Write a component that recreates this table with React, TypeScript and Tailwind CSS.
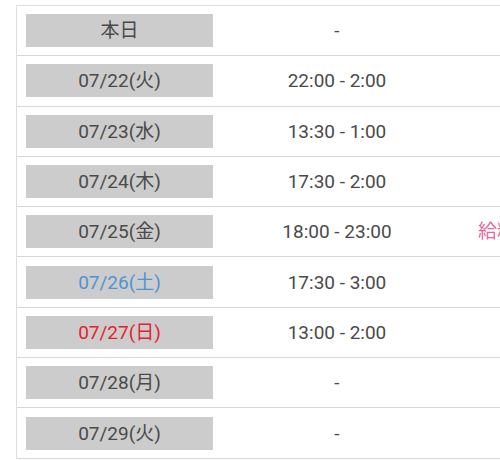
import React from "react";

type Row = { date: string; time: string; color?: string; note?: string };

const rows: Row[] = [
  { date: "本日", time: "-" },
  { date: "07/22(火)", time: "22:00 - 2:00" },
  { date: "07/23(水)", time: "13:30 - 1:00" },
  { date: "07/24(木)", time: "17:30 - 2:00" },
  { date: "07/25(金)", time: "18:00 - 23:00", note: "給料日" },
  { date: "07/26(土)", time: "17:30 - 3:00", color: "blue" },
  { date: "07/27(日)", time: "13:00 - 2:00", color: "red" },
  { date: "07/28(月)", time: "-" },
  { date: "07/29(火)", time: "-" },
];

export default function App() {
  return (
    <div
      className="w-[500px] h-[460px] overflow-hidden bg-white pt-[5px] pl-[16px]"
      style={{ fontFamily: 'Roboto, "Noto Sans CJK JP", sans-serif' }}
    >
      <div className="w-[600px] border-l border-t border-[#dedede]">
        {rows.map((r) => (
          <div
            key={r.date}
            className="h-[50.3px] flex items-center border-b-[1.5px] border-[#d6d6d6]"
          >
            <div className="w-[219px] pl-[9px] flex items-center">
              <div
                className={
                  "w-[187px] h-[33px] bg-[#cccccc] flex items-center justify-center text-[19px] leading-none " +
                  (r.color === "blue"
                    ? "text-[#4f93d6]"
                    : r.color === "red"
                    ? "text-[#e6212b]"
                    : "text-[#4a4a4a]")
                }
              >
                {r.date}
              </div>
            </div>
            <div className="w-[202px] flex items-center justify-center text-[19px] leading-none text-[#4a4a4a]">
              {r.time}
            </div>
            <div className="flex-1 pl-[40px] text-[19px] leading-none text-[#e2679b] whitespace-nowrap">
              {r.note ?? ""}
            </div>
          </div>
        ))}
      </div>
    </div>
  );
}
